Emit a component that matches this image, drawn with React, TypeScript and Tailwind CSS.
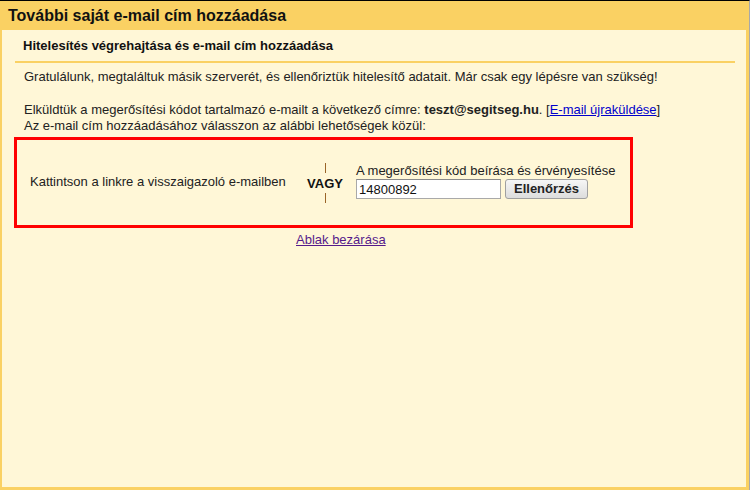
export default function App() {
  return (
    <div
      className="w-[750px] h-[490px] flex flex-col border-t border-black border-r border-r-[#a8a8a8] bg-[#fad163] pl-[2px] pr-[3px] pb-[3px] text-[#222]"
      style={{ fontFamily: '"Liberation Sans", Arial, sans-serif' }}
    >
      <div className="h-[29px] flex items-center pl-[6px] text-[16px] font-bold text-[#111]">
        További saját e-mail cím hozzáadása
      </div>
      <div className="flex-1 bg-[#fff7d7] flex flex-col">
        <div className="ml-[13px] mr-[11px] pt-[8px] pb-[7px] pl-[8px] border-b-2 border-[#fad163] text-[13px] leading-[16px] font-bold text-[#111]">
          Hitelesítés végrehajtása és e-mail cím hozzáadása
        </div>
        <div className="pl-[22px] pt-[6px] text-[13px] leading-[16px]">
          <div>
            Gratulálunk, megtaláltuk másik szerverét, és ellenőriztük hitelesítő adatait. Már csak egy lépésre van szükség!
          </div>
          <div className="mt-[17px]">
            Elküldtük a megerősítési kódot tartalmazó e-mailt a következő címre:{" "}
            <span className="font-bold">teszt@segitseg.hu</span>. [
            <a href="#" className="text-[#0000cc] underline">E-mail újraküldése</a>]
          </div>
          <div>Az e-mail cím hozzáadásához válasszon az alábbi lehetőségek közül:</div>
        </div>
        <div className="ml-[12px] mt-[3px] w-[619px] h-[91px] border-[3px] border-[#ff0000] flex items-center text-[13px] leading-[16px]">
          <div className="w-[277px] pl-[13px] pb-[1px]">Kattintson a linkre a visszaigazoló e-mailben</div>
          <div className="w-[62px] flex flex-col items-center">
            <div className="w-px h-[10px] bg-[#9a6428]" />
            <div className="mt-[3px] font-bold text-[#111]">VAGY</div>
            <div className="mt-[1px] w-px h-[10px] bg-[#9a6428]" />
          </div>
          <div className="flex flex-col pb-[3px]">
            <div>A megerősítési kód beírása és érvényesítése</div>
            <div className="flex items-center gap-[4px]">
              <input
                defaultValue="14800892"
                className="w-[145px] h-[20px] bg-white border border-[#a9a9a9] border-t-[#8a8a8a] px-[2px] text-[13px] text-[#111] outline-none"
                style={{ fontFamily: '"Liberation Sans", Arial, sans-serif' }}
              />
              <button
                className="w-[83px] h-[20px] rounded-[3px] border border-[#a0a0a0] bg-gradient-to-b from-[#f6f6f6] to-[#dddddd] font-bold text-[13px] text-[#222] flex items-center justify-center"
                style={{ fontFamily: '"Liberation Sans", Arial, sans-serif' }}
              >
                Ellenőrzés
              </button>
            </div>
          </div>
        </div>
        <div className="ml-[294px] mt-[4px] text-[13px] leading-[16px]">
          <a href="#" className="text-[#551a8b] underline">Ablak bezárása</a>
        </div>
      </div>
    </div>
  );
}
